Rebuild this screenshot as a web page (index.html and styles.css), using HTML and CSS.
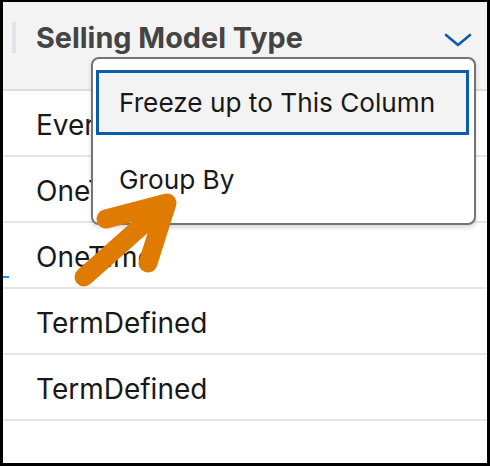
FILE: index.html
```html
<!DOCTYPE html>
<html lang="en">
<head>
<meta charset="utf-8">
<title>Selling Model Type</title>
<link rel="stylesheet" href="styles.css">
</head>
<body>
<div class="frame">
  <div class="header">
    <span class="grip"></span>
    <span class="title">Selling Model Type</span>
    <svg class="chevron" width="30" height="16" viewBox="0 0 30 16"><polyline points="2,3 14,13 26,3" fill="none" stroke="#0b5cab" stroke-width="2.6" stroke-linecap="round" stroke-linejoin="round"/></svg>
  </div>
  <div class="row"><span class="cell">Evergreen</span></div>
  <div class="row"><span class="cell">OneTime</span></div>
  <div class="row"><span class="mark"></span><span class="cell">OneTime</span></div>
  <div class="row"><span class="cell">TermDefined</span></div>
  <div class="row"><span class="cell">TermDefined</span></div>
  <div class="row last"></div>

  <div class="menu">
    <div class="item active">Freeze up to This Column</div>
    <div class="item">Group By</div>
  </div>

  <svg class="arrow" width="490" height="466" viewBox="0 0 490 466">
    <path d="M84 277 L165 205 M106 219 L167 203 L148 263" fill="none" stroke="#df7b00" stroke-width="19" stroke-linecap="round" stroke-linejoin="round"/>
  </svg>
</div>
</body>
</html>
```
FILE: styles.css
```css
* { box-sizing: border-box; }
html, body { margin: 0; padding: 0; background: #fff; }
body { font-family: Inter, "Noto Sans", sans-serif; }

.frame {
  position: relative;
  width: 490px;
  height: 466px;
  border-style: solid;
  border-color: #000;
  border-width: 2px 3px 3px 3px;
  background: #fff;
  overflow: hidden;
}

.header {
  display: flex;
  align-items: center;
  height: 89px;
  padding: 0 13px 16px 9px;
  background: #f3f3f3;
  border-bottom: 2px solid #dddddd;
}
.grip {
  width: 4px;
  height: 31px;
  background: #e2e2e8;
  margin-right: 20px;
}
.title {
  flex: 1;
  font-size: 28.8px;
  font-weight: 700;
  color: #444444;
}
.chevron { display: block; margin-top: 4px; }

.row {
  position: relative;
  display: flex;
  align-items: center;
  height: 66px;
  padding: 3px 0 0 33px;
  border-bottom: 2px solid #e5e5e5;
}
.row.last { border-bottom: none; }
.cell {
  font-size: 28px;
  color: #181818;
}
.mark {
  position: absolute;
  left: 0;
  bottom: 9px;
  width: 6px;
  height: 2px;
  background: #1b96ff;
}

.menu {
  position: absolute;
  left: 88px;
  top: 55px;
  width: 385px;
  display: flex;
  flex-direction: column;
  gap: 12px;
  padding: 11px 5px 11px 3px;
  background: #fff;
  border: 2px solid #747474;
  border-radius: 8px;
  box-shadow: 0 3px 4px rgba(0, 0, 0, 0.14);
}
.item {
  display: flex;
  align-items: center;
  height: 65px;
  padding: 0 0 0 20px;
  border: 3px solid transparent;
  font-size: 26.2px;
  color: #181818;
}
.item.active {
  background: #f3f3f3;
  border-color: #0b5cab;
}

.arrow {
  position: absolute;
  left: -3px;
  top: -2px;
  pointer-events: none;
}
```
